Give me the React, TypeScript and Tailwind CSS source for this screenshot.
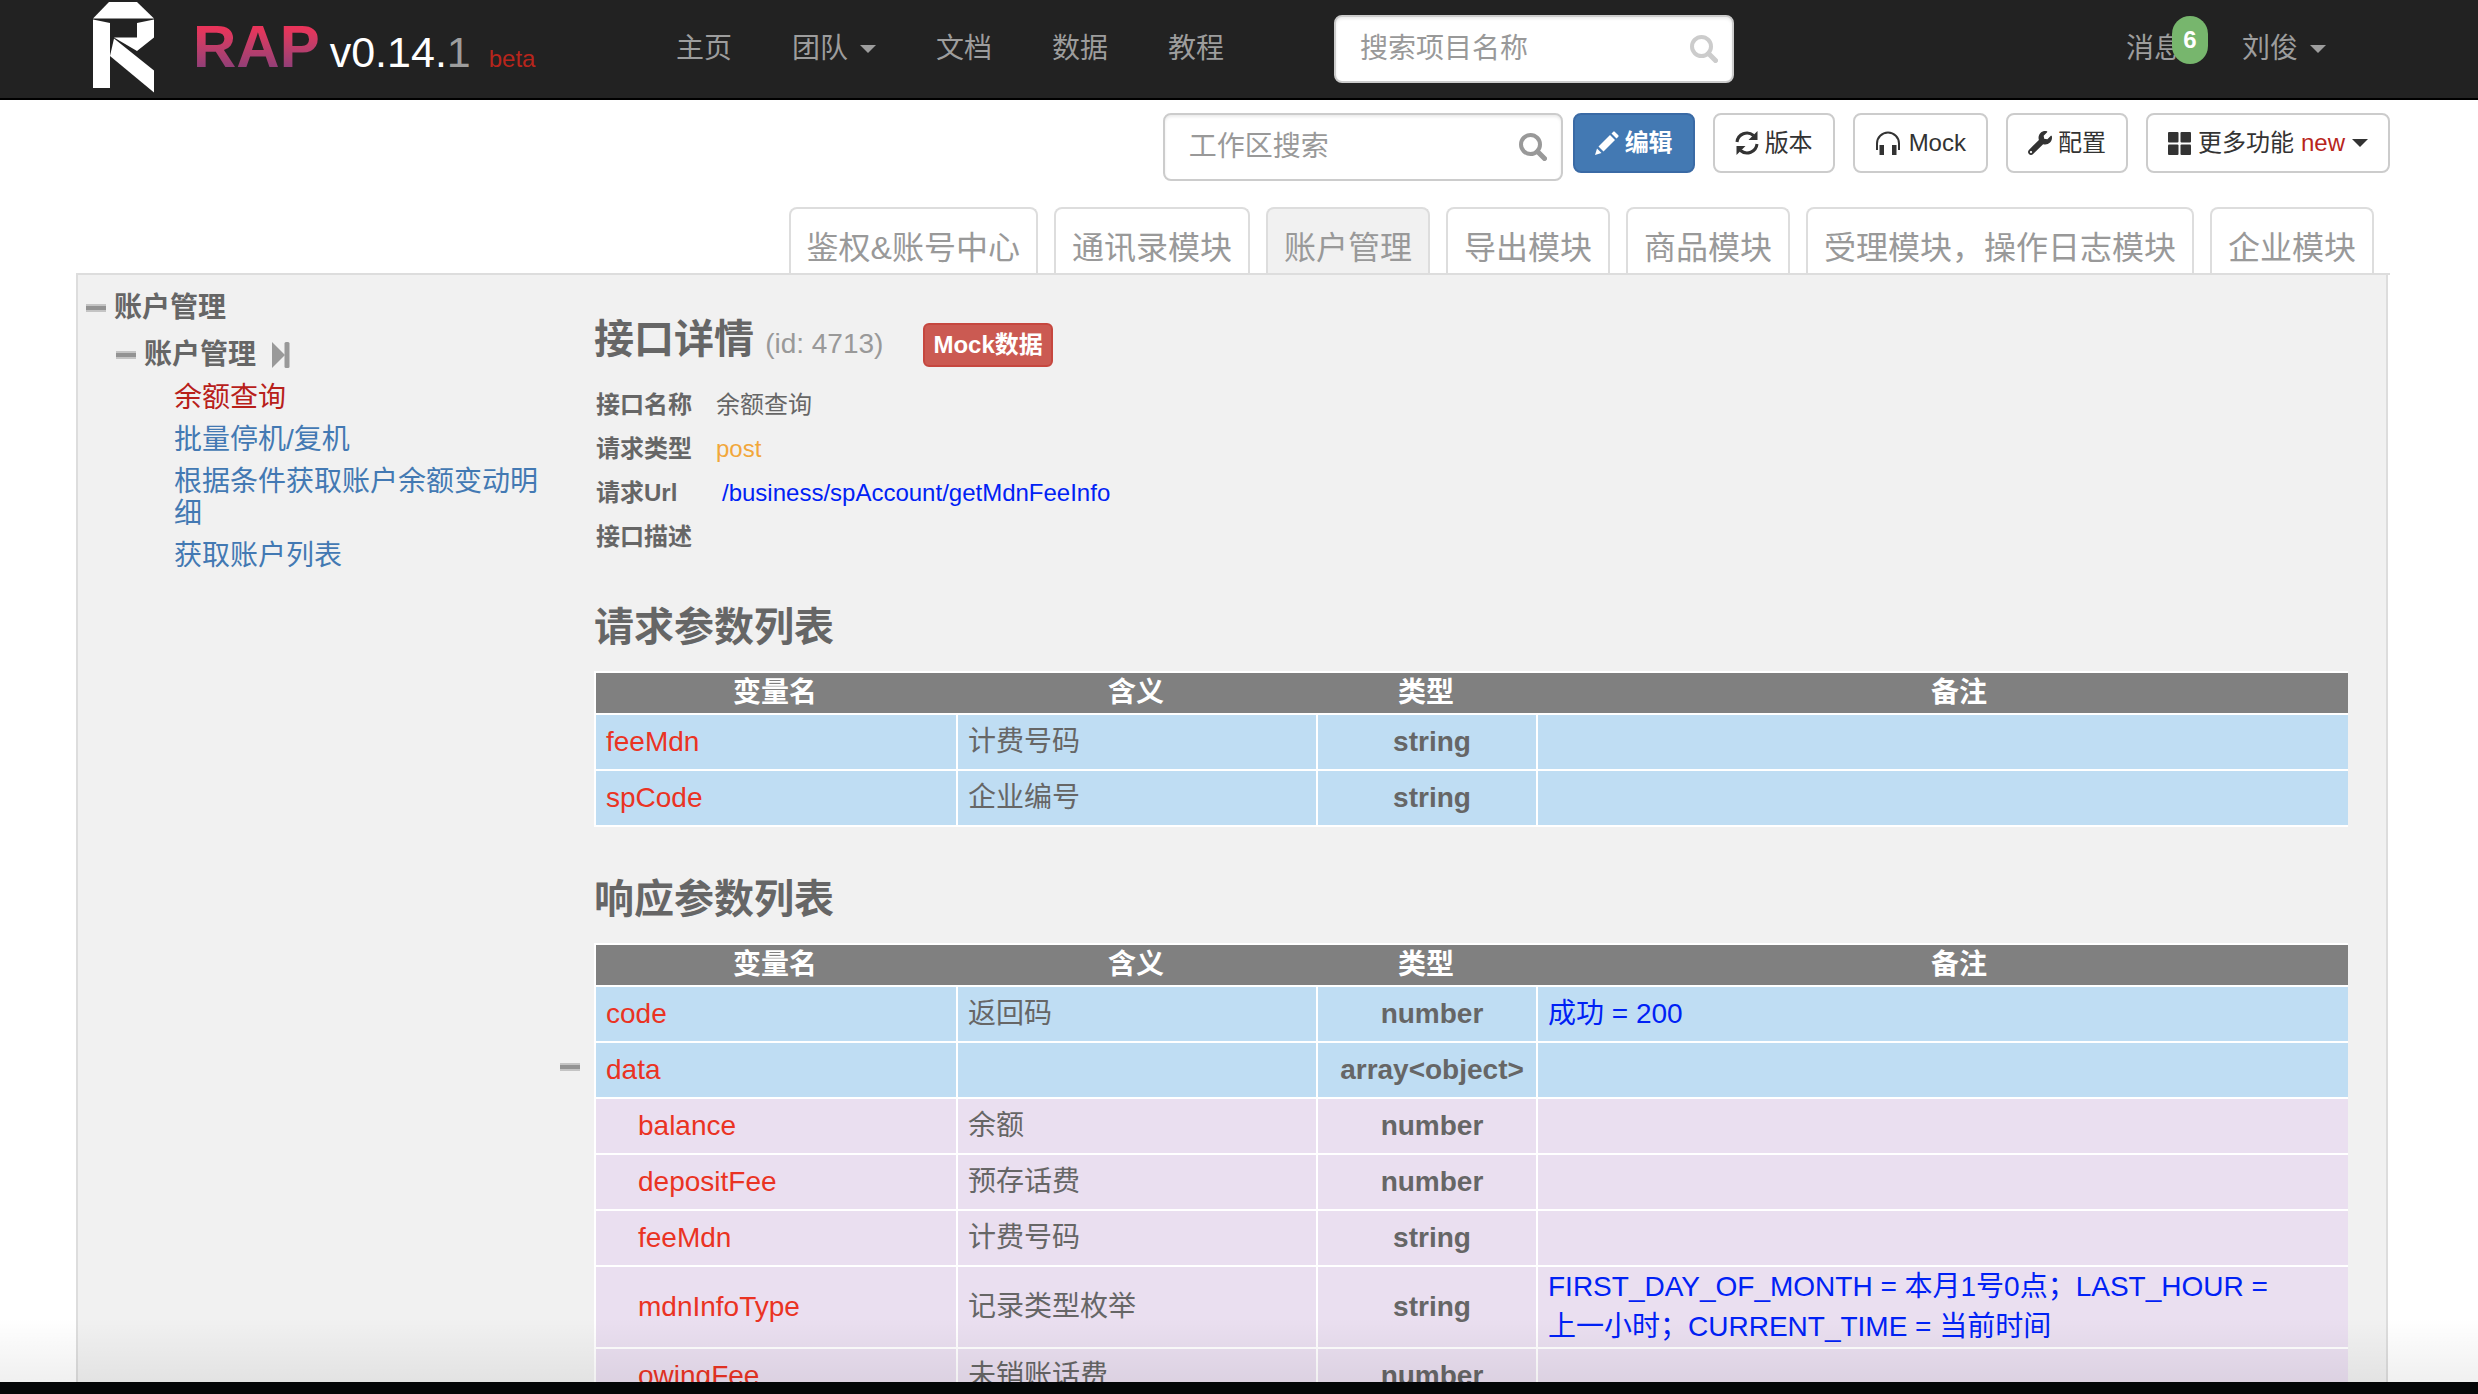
import React, { useState } from 'react';
import { FaWrench } from 'react-icons/fa';

interface Param {
  name: string;
  meaning: string;
  type: string;
  remark?: string;
  child?: boolean;
  expandable?: boolean;
}

const NAV_LINKS = ['主页', '团队', '文档', '数据', '教程'];

const TABS = ['鉴权&账号中心', '通讯录模块', '账户管理', '导出模块', '商品模块', '受理模块，操作日志模块', '企业模块'];

const ACTIONS = ['余额查询', '批量停机/复机', '根据条件获取账户余额变动明细', '获取账户列表'];

const REQUEST_PARAMS: Param[] = [
  { name: 'feeMdn', meaning: '计费号码', type: 'string' },
  { name: 'spCode', meaning: '企业编号', type: 'string' },
];

const RESPONSE_PARAMS: Param[] = [
  { name: 'code', meaning: '返回码', type: 'number', remark: '成功 = 200' },
  { name: 'data', meaning: '', type: 'array<object>', expandable: true },
  { name: 'balance', meaning: '余额', type: 'number', child: true },
  { name: 'depositFee', meaning: '预存话费', type: 'number', child: true },
  { name: 'feeMdn', meaning: '计费号码', type: 'string', child: true },
  {
    name: 'mdnInfoType',
    meaning: '记录类型枚举',
    type: 'string',
    remark: 'FIRST_DAY_OF_MONTH = 本月1号0点；LAST_HOUR =\n上一小时；CURRENT_TIME = 当前时间',
    child: true,
  },
  { name: 'owingFee', meaning: '未销账话费', type: 'number', child: true },
];

const Logo = () => (
  <svg width="63" height="94" viewBox="0 2 63 94" fill="#fff" aria-hidden="true">
    <path d="M17 2H45L62 18.5H1Z" />
    <path d="M1 19.5L18 23V88H1Z" />
    <path d="M62 19.5L45 23V37.5H22L45 51L62 37.5Z" />
    <path d="M22 38.5L18 56L62 92.5V70.5Z" />
  </svg>
);

const SearchIcon = ({ className }: { className: string }) => (
  <svg className={className} width="28" height="28" viewBox="0 0 28 28" fill="none" stroke="currentColor" aria-hidden="true">
    <circle cx="11.5" cy="11.5" r="9.5" strokeWidth="4" />
    <path d="M18.5 18.5L25.5 25.5" strokeWidth="5" strokeLinecap="round" />
  </svg>
);

const PencilIcon = () => (
  <svg width="24" height="24" viewBox="0 0 24 24" fill="currentColor" aria-hidden="true">
    <path d="M0 24L2 17.5L6.5 22Z" />
    <path d="M3.5 15.5L15 4L20 9L8.5 20.5Z" />
    <path d="M16.5 2.5L18.3 0.7Q19 0 19.7 0.7L23.3 4.3Q24 5 23.3 5.7L21.5 7.5Z" />
  </svg>
);

const RefreshIcon = () => (
  <svg width="24" height="24" viewBox="0 0 24 24" fill="none" stroke="currentColor" strokeWidth="3" aria-hidden="true">
    <path d="M2 11A10 10 0 0 1 18.5 4.5" />
    <path d="M22 13A10 10 0 0 1 5.5 19.5" />
    <path d="M22.5 0V9H13.5Z" fill="currentColor" stroke="none" />
    <path d="M1.5 24V15H10.5Z" fill="currentColor" stroke="none" />
  </svg>
);

const HeadphonesIcon = () => (
  <svg width="26" height="24" viewBox="0 0 26 24" aria-hidden="true">
    <path d="M2 19V12.5A11 11 0 0 1 24 12.5V19" fill="none" stroke="currentColor" strokeWidth="2" />
    <path d="M4.5 14H9V24H4.5ZM17 14H21.5V24H17Z" fill="currentColor" />
  </svg>
);

const GridIcon = () => (
  <svg width="23" height="23" viewBox="0 0 23 23" fill="currentColor" aria-hidden="true">
    <rect width="10.5" height="10.5" rx="1" />
    <rect x="12.5" width="10.5" height="10.5" rx="1" />
    <rect y="12.5" width="10.5" height="10.5" rx="1" />
    <rect x="12.5" y="12.5" width="10.5" height="10.5" rx="1" />
  </svg>
);

const StepIcon = () => (
  <svg width="18" height="26" viewBox="0 0 18 26" fill="#999" aria-hidden="true">
    <path d="M0 0L13 13L0 26Z" />
    <rect x="12.5" width="5" height="26" rx="1.5" />
  </svg>
);

const Caret = () => (
  <span className="inline-block border-x-8 border-t-8 border-x-transparent border-t-current" />
);

const Minus = () => <span className="block h-2 w-5 border-y-2 border-[#c4c4c4] bg-[#939393]" />;

const SearchBox = ({ label, iconClass }: { label: string; iconClass: string }) => (
  <div className="relative w-[400px]">
    <input
      type="text"
      aria-label={label}
      placeholder={label}
      className="block h-[68px] w-full rounded-lg border-2 border-[#ccc] bg-white pr-16 pl-6 text-[28px] shadow-[inset_0_2px_3px_rgba(0,0,0,0.08)] outline-none placeholder:text-[#999]"
    />
    <SearchIcon className={iconClass} />
  </div>
);

const toolButton = 'flex h-[60px] items-center rounded-lg border-2 border-[#ccc] bg-white text-[24px] text-[#333]';

const Navbar = () => (
  <header className="flex h-[100px] shrink-0 items-center border-b-2 border-black bg-[#222] pr-[88px] pl-[76px] text-[28px] text-[#9d9d9d]">
    <a href="#" className="flex w-[570px] shrink-0 items-center gap-[38px] pl-4">
      <Logo />
      <span className="flex items-baseline pt-2 leading-[60px]">
        <span className="bg-linear-to-b from-[#e8345a] from-20% to-[#7d3c7c] bg-clip-text text-[60px] font-bold text-transparent">RAP</span>
        <span className="ml-2.5 text-[43px] text-white">
          v0.14.<span className="text-[#9d9d9d]">1</span>
        </span>
        <span className="ml-[18px] text-[24px] text-[#b8251c]">beta</span>
      </span>
    </a>
    <nav className="flex">
      {NAV_LINKS.map((link) => (
        <a key={link} href="#" className="flex items-center gap-3 px-[30px]">
          {link}
          {link === '团队' && <Caret />}
        </a>
      ))}
    </nav>
    <div className="ml-20">
      <SearchBox label="搜索项目名称" iconClass="absolute top-5 right-4 text-[#ccc]" />
    </div>
    <div className="mr-[34px] ml-auto flex">
      <a href="#" className="relative px-[30px]">
        消息
        <span className="absolute -top-3 right-1 flex h-12 w-9 items-center justify-center rounded-full bg-[#77b66d] text-[24px] font-bold text-white">
          6
        </span>
      </a>
      <button type="button" className="flex items-center gap-3 px-[30px]">
        刘俊
        <Caret />
      </button>
    </div>
  </header>
);

const Toolbar = () => (
  <div className="flex items-start justify-end pt-[13px]">
    <SearchBox label="工作区搜索" iconClass="absolute top-5 right-4 text-[#999]" />
    <div className="ml-2.5 flex gap-[18px]">
      <button type="button" className="flex h-[60px] items-center gap-1.5 rounded-lg border-2 border-[#3a6aa5] bg-[#4379b3] px-5 text-[24px] font-bold text-white">
        <PencilIcon />
        编辑
      </button>
      <button type="button" className={`${toolButton} gap-1.5 px-5`}>
        <RefreshIcon />
        版本
      </button>
      <button type="button" className={`${toolButton} gap-2 px-5`}>
        <HeadphonesIcon />
        Mock
      </button>
      <button type="button" className={`${toolButton} gap-1.5 px-5`}>
        <FaWrench size={24} aria-hidden="true" />
        配置
      </button>
      <button type="button" className={`${toolButton} gap-[7px] px-5`}>
        <GridIcon />
        更多功能
        <span className="text-[#b8251c]">new</span>
        <Caret />
      </button>
    </div>
  </div>
);

const Sidebar = ({ active, onSelect }: { active: string; onSelect: (name: string) => void }) => (
  <aside className="w-[470px] shrink-0 pt-2 text-[28px]">
    <div className="flex h-[50px] items-center gap-2 pl-2 font-bold">
      <Minus />
      账户管理
    </div>
    <div className="flex h-11 items-center gap-2 pl-[38px] font-bold">
      <Minus />
      账户管理
      <span className="ml-2">
        <StepIcon />
      </span>
    </div>
    <ul className="pl-24 leading-8">
      {ACTIONS.map((name) => (
        <li key={name} className="py-[5px]">
          <a href="#" onClick={() => onSelect(name)} className={active === name ? 'text-[#b8201a]' : 'text-[#4379b3]'}>
            {name}
          </a>
        </li>
      ))}
    </ul>
  </aside>
);

const ParamTable = ({ title, params }: { title: string; params: Param[] }) => (
  <section className="mt-[50px]">
    <h2 className="text-[40px] leading-[44px] font-bold">{title}</h2>
    <table className="mt-[22px] w-full table-fixed border-separate border-spacing-0 border-t-2 border-l-2 border-white text-[28px] leading-10">
      <thead>
        <tr className="bg-[#808080] text-white">
          <th className="w-[362px] border-b-2 border-white pr-1">变量名</th>
          <th className="w-[360px] border-b-2 border-white pr-1">含义</th>
          <th className="w-[220px] border-b-2 border-white pr-1">类型</th>
          <th className="border-b-2 border-white pl-8">备注</th>
        </tr>
      </thead>
      <tbody>
        {params.map((p) => (
          <tr key={p.name} className={p.child ? 'h-14 bg-[#eadff0]' : 'h-14 bg-[#bfddf3]'}>
            <td className={`relative border-r-2 border-b-2 border-white text-[#ea3323] ${p.child ? 'pl-[42px]' : 'pl-2.5'}`}>
              {p.expandable && (
                <button type="button" aria-label="收起" className="absolute top-5 -left-9">
                  <Minus />
                </button>
              )}
              {p.name}
            </td>
            <td className="border-r-2 border-b-2 border-white pl-2.5">{p.meaning}</td>
            <td className="border-r-2 border-b-2 border-white pl-2.5 text-center font-bold">{p.type}</td>
            <td className="border-b-2 border-white pl-2.5 whitespace-pre-line text-[#0021f5]">{p.remark}</td>
          </tr>
        ))}
      </tbody>
    </table>
  </section>
);

const InterfaceDetail = () => (
  <main className="min-w-0 flex-1 pt-[42px] pr-[38px] pl-[46px]">
    <div className="flex items-start">
      <h2 className="text-[40px] leading-[44px] font-bold">
        接口详情 <span className="text-[28px] font-normal text-[#999]">(id: 4713)</span>
      </h2>
      <button type="button" className="mt-1.5 ml-10 h-11 rounded-md border-2 border-[#c6473f] bg-[#cb5a52] px-2 text-[24px] leading-10 font-bold text-white">
        Mock数据
      </button>
    </div>
    <dl className="mt-4 -mb-1 grid grid-cols-[120px_1fr] pl-0.5 text-[24px] leading-[44px]">
      <dt className="font-bold">接口名称</dt>
      <dd>余额查询</dd>
      <dt className="font-bold">请求类型</dt>
      <dd className="text-[#f2a73b]">post</dd>
      <dt className="font-bold">请求Url</dt>
      <dd className="pl-1.5 text-[#0021f5]">/business/spAccount/getMdnFeeInfo</dd>
      <dt className="font-bold">接口描述</dt>
      <dd />
    </dl>
    <ParamTable title="请求参数列表" params={REQUEST_PARAMS} />
    <ParamTable title="响应参数列表" params={RESPONSE_PARAMS} />
  </main>
);

const App: React.FC = () => {
  const [tab, setTab] = useState('账户管理');
  const [action, setAction] = useState('余额查询');

  return (
    <div className="flex h-screen flex-col overflow-hidden bg-white font-['Liberation_Sans','Noto_Sans_CJK_SC',sans-serif] text-[#666]">
      <Navbar />
      <div className="relative min-h-0 flex-1 overflow-hidden pr-[88px] pl-[76px]">
        <Toolbar />
        <div className="mt-[26px] flex justify-end gap-4 border-b-2 border-[#ddd] pr-4">
          {TABS.map((name) => (
            <button
              key={name}
              type="button"
              onClick={() => setTab(name)}
              className={`h-[66px] rounded-t-lg border-2 border-b-0 border-[#ddd] px-4 pt-3.5 text-[32px] text-[#999] ${tab === name ? 'bg-[#f1f1f1]' : 'bg-white'}`}
            >
              {name}
            </button>
          ))}
        </div>
        <div className="mr-0.5 flex border-x-2 border-[#ddd] bg-[#f1f1f1]">
          <Sidebar active={action} onSelect={setAction} />
          <InterfaceDetail />
        </div>
        <div className="pointer-events-none absolute inset-x-0 bottom-0 h-16 bg-linear-to-t from-black/6 to-transparent" />
      </div>
      <footer className="h-3 shrink-0 bg-[#040607]" />
    </div>
  );
};

export default App;
